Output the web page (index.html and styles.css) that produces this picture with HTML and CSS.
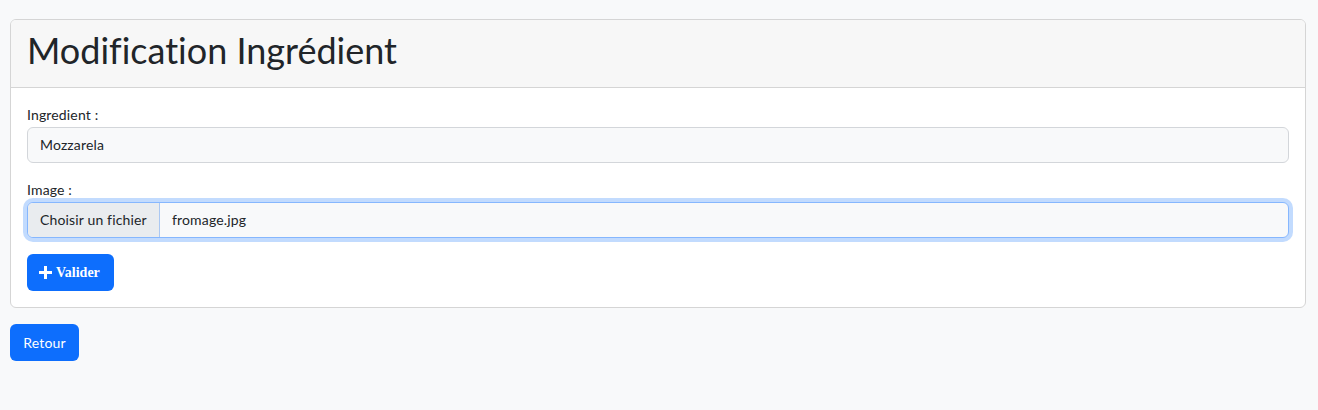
FILE: index.html
```html
<!DOCTYPE html>
<html lang="fr">
<head>
<meta charset="utf-8">
<title>Modification Ingrédient</title>
<link rel="stylesheet" href="styles.css">
</head>
<body>
<div class="card">
  <div class="card-header">
    <h1 class="title">Modification Ingrédient</h1>
  </div>
  <div class="card-body">
    <div class="group">
      <label class="label">Ingredient :</label>
      <div class="input">Mozzarela</div>
    </div>
    <div class="group">
      <label class="label">Image :</label>
      <div class="input file focus">
        <span class="file-btn">Choisir un fichier</span>
        <span class="file-name">fromage.jpg</span>
      </div>
    </div>
    <button class="btn btn-valider">
      <svg class="plus" width="13" height="13" viewBox="0 0 13 13"><path d="M5 0h3v5h5v3H8v5H5V8H0V5h5z" fill="#fff"/></svg>
      <span class="serif">Valider</span>
    </button>
  </div>
</div>
<button class="btn btn-retour">Retour</button>
</body>
</html>
```
FILE: styles.css
```css
* { box-sizing: border-box; }
body {
  margin: 0;
  padding: 19px 12px 0 10px;
  background: #f8f9fa;
  font-family: "Lato", "Noto Sans", sans-serif;
  font-variant-ligatures: none;
  color: #212529;
  font-size: 14px;
  line-height: 1.5;
  letter-spacing: 0.15px;
}
.card {
  border: 1px solid #d5d5d5;
  border-radius: 6px;
  background: #fff;
  overflow: hidden;
}
.card-header {
  background: #f7f7f7;
  border-bottom: 1px solid #d5d5d5;
  height: 68px;
  padding: 9px 16px 0;
}
.title {
  margin: 0;
  font-weight: 400;
  font-size: 36px;
  line-height: 43px;
  letter-spacing: 0;
}
.card-body {
  padding: 16px;
}
.group { margin-bottom: 16px; }
.label {
  display: block;
  line-height: 21px;
  margin-bottom: 2px;
}
.input {
  height: 36px;
  border: 1px solid #d3d6da;
  border-radius: 6px;
  background: #f8f9fa;
  padding: 6px 12px;
  line-height: 22px;
}
.input.file {
  display: flex;
  padding: 0;
  overflow: hidden;
}
.input.focus {
  border-color: #86b7fe;
  box-shadow: 0 0 0 4px rgba(13, 110, 253, 0.25);
  overflow: visible;
}
.file-btn {
  background: #e9ecef;
  border-right: 1px solid #aac8f3;
  padding: 6px 12px;
  width: 132px;
  border-radius: 5px 0 0 5px;
}
.file-name {
  padding: 6px 12px;
}
.btn {
  display: inline-flex;
  align-items: center;
  height: 37px;
  border: 0;
  border-radius: 6px;
  background: #0d6efd;
  color: #fff;
  font-family: "Lato", "Noto Sans", sans-serif;
  font-size: 14px;
  letter-spacing: 0.15px;
  padding: 0 12px;
}
.btn-valider { width: 87px; gap: 4px; }
.plus { display: block; }
.serif {
  font-family: "Liberation Serif", serif;
  font-weight: 700;
  font-size: 14px;
  letter-spacing: 0;
}
.btn-retour {
  margin-top: 16px;
  width: 69px;
  justify-content: center;
  padding: 0;
}
```
